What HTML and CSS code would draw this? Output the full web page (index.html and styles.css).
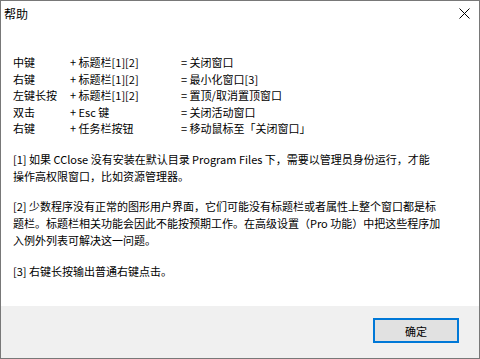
FILE: index.html
```html
<!DOCTYPE html>
<html lang="zh-CN">
<head>
    <meta charset="UTF-8">
    <title>帮助</title>
    <link rel="stylesheet" href="styles.css">
</head>
<body>
    <div class="dialog">
        <div class="title-bar">
            <span class="title">帮助</span>
            <span class="close-btn">
                <svg width="11" height="11" viewBox="0 0 11 11"><path d="M0.5 0.5 L10.5 10.5 M10.5 0.5 L0.5 10.5" stroke="#000" stroke-width="1"/></svg>
            </span>
        </div>
        <div class="content">
            <div class="keys">
                <div class="row"><span class="k">中键</span><span class="p">+ 标题栏[1][2]</span><span class="r">= 关闭窗口</span></div>
                <div class="row"><span class="k">右键</span><span class="p">+ 标题栏[1][2]</span><span class="r">= 最小化窗口[3]</span></div>
                <div class="row"><span class="k">左键长按</span><span class="p">+ 标题栏[1][2]</span><span class="r">= 置顶/取消置顶窗口</span></div>
                <div class="row"><span class="k">双击</span><span class="p">+ Esc 键</span><span class="r">= 关闭活动窗口</span></div>
                <div class="row"><span class="k">右键</span><span class="p">+ 任务栏按钮</span><span class="r">= 移动鼠标至「关闭窗口」</span></div>
            </div>
            <p class="note">[1] 如果 CClose 没有安装在默认目录 Program Files 下，需要以管理员身份运行，才能<br>操作高权限窗口，比如资源管理器。</p>
            <p class="note">[2] 少数程序没有正常的图形用户界面，它们可能没有标题栏或者属性上整个窗口都是标题栏。标题栏相关功能会因此不能按预期工作。在高级设置（Pro 功能）中把这些程序加入例外列表可解决这一问题。</p>
            <p class="note">[3] 右键长按输出普通右键点击。</p>
        </div>
        <div class="footer">
            <button class="ok">确定</button>
        </div>
    </div>
</body>
</html>
```

FILE: styles.css
```css
html, body {
    margin: 0;
    padding: 0;
}
body {
    font-family: "Noto Sans CJK SC", "Liberation Sans", sans-serif;
    font-size: 11px;
    color: #000;
    background: #fff;
}
.dialog {
    width: 480px;
    height: 359px;
    box-sizing: border-box;
    border: 1px solid #787878;
    display: flex;
    flex-direction: column;
    background: #fff;
}
.title-bar {
    height: 28px;
    display: flex;
    align-items: center;
    justify-content: space-between;
    padding: 0 9px 0 3px;
}
.title {
    font-size: 12px;
    margin-top: -4px;
}
.close-btn {
    display: flex;
    margin-top: -3px;
}
.content {
    flex: 1;
    padding: 25px 12px 0 12px;
}
.keys {
    margin-bottom: 14px;
}
.row {
    display: flex;
    height: 16.5px;
    line-height: 16.5px;
}
.k {
    width: 57px;
}
.p {
    width: 111px;
}
.note {
    margin: 0 0 13.5px;
    line-height: 17px;
    width: 432px;
}
.footer {
    height: 52px;
    background: #f0f0f0;
    display: flex;
    justify-content: flex-end;
    align-items: flex-start;
    padding: 12px 20px 0 0;
    box-sizing: border-box;
}
.ok {
    width: 86px;
    height: 25px;
    background: #e1e1e1;
    border: 2px solid #0078d7;
    font-family: inherit;
    font-size: 11px;
    padding: 0;
}
```
